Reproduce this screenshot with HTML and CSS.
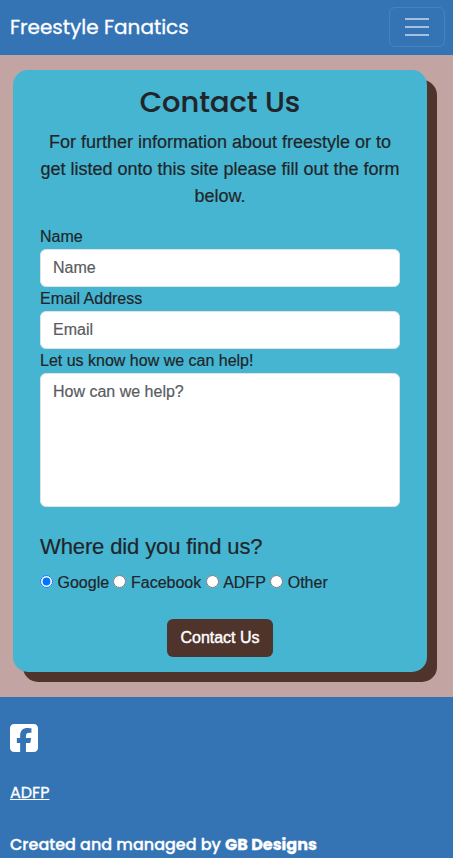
FILE: index.html
```html
<!DOCTYPE html>
<html lang="en">
<head>
<meta charset="utf-8">
<title>Freestyle Fanatics</title>
<link rel="stylesheet" href="styles.css">
</head>
<body>
<nav class="navbar">
  <a class="brand"><span>Freestyle Fanatics</span></a>
  <button class="toggler" type="button" aria-label="Toggle navigation">
    <svg width="30" height="30" viewBox="0 0 30 30"><path stroke="rgba(255,255,255,.55)" stroke-miterlimit="10" stroke-width="2" d="M3 7h24M3 15h24M3 23h24"/></svg>
  </button>
</nav>
<main>
  <section class="card">
    <h1><span>Contact Us</span></h1>
    <p class="intro">For further information about freestyle or to<br>get listed onto this site please fill out the form<br>below.</p>
    <form>
      <label for="name">Name</label>
      <input class="field" id="name" type="text" placeholder="Name">
      <label for="email">Email Address</label>
      <input class="field" id="email" type="email" placeholder="Email">
      <label for="help">Let us know how we can help!</label>
      <textarea class="field" id="help" rows="5" placeholder="How can we help?"></textarea>
      <h2>Where did you find us?</h2>
      <div class="choices">
        <label><input type="radio" name="found" checked><span>Google</span></label>
        <label><input type="radio" name="found"><span>Facebook</span></label>
        <label><input type="radio" name="found"><span>ADFP</span></label>
        <label><input type="radio" name="found"><span>Other</span></label>
      </div>
      <button class="submit" type="button">Contact Us</button>
    </form>
  </section>
</main>
<footer>
  <svg class="facebook" viewBox="0 0 448 512" fill="#fff"><path d="M64 32C28.7 32 0 60.7 0 96V416c0 35.300 28.700 64 64 64h98.200V334.200H109.400V256h52.800V222.300c0-87.100 39.400-127.500 125-127.500c16.200 0 44.200 3.200 55.700 6.400V172c-6-.6-16.500-1-29.600-1c-42 0-58.200 15.900-58.200 57.200V256h83.600l-14.400 78.200H255V480H384c35.300 0 64-28.700 64-64V96c0-35.300-28.700-64-64-64H64z"/></svg>
  <a class="link" href="#">ADFP</a>
  <p class="credit"><span class="made">Created and managed by</span> <strong>GB Designs</strong></p>
</footer>
</body>
</html>
```
FILE: styles.css
```css
* { box-sizing: border-box; }
body {
  margin: 0;
  height: 858px;
  overflow: hidden;
  background: #c2a5a2;
  color: #212529;
  font: 16px/24px "Liberation Sans", Arial, sans-serif;
  -webkit-text-stroke: .2px currentColor;
}
.navbar {
  display: flex;
  justify-content: space-between;
  align-items: flex-start;
  height: 55px;
  padding: 7px 8px 0 10px;
  background: #3474b5;
}
.brand {
  color: #fff;
  font: 20px/40px Poppins, Inter, sans-serif;
  white-space: nowrap;
  -webkit-text-stroke: .3px #fff;
}
.toggler {
  display: flex;
  align-items: center;
  justify-content: center;
  width: 56px;
  height: 40px;
  padding: 0;
  background: none;
  border: 1px solid rgba(255, 255, 255, .1);
  border-radius: 6px;
}
main { padding: 15px 26px 25px 13px; }
.card {
  height: 602px;
  padding: 15px 27px 0;
  background: #46b5d1;
  border-radius: 15px;
  box-shadow: 10px 10px #4f342c;
}
h1 {
  margin: 0 0 10px;
  font: 500 28.8px/34px Poppins, Inter, sans-serif;
  text-align: center;
}
.intro {
  margin: 0 -10px 15px;
  font-size: 18px;
  line-height: 27px;
  text-align: center;
}
label { display: block; height: 24px; }
.field {
  display: block;
  width: 100%;
  height: 38px;
  margin: 0;
  padding: 6px 12px;
  color: #212529;
  background: #fff;
  border: 1px solid #dee2e6;
  border-radius: 6px;
  font: inherit;
}
.field::placeholder { color: #595c5f; opacity: 1; }
textarea.field { height: 134px; resize: none; }
h2 {
  margin: 26px 0 11px;
  font-size: 22px;
  font-weight: 400;
  line-height: 27px;
  letter-spacing: -.12px;
}
.choices { display: flex; gap: 4.4px; }
.choices label { display: flex; }
.choices input { width: 13px; height: 13px; margin: 4px 4.5px 0 0; }
.submit {
  display: block;
  width: 106px;
  height: 38px;
  margin: 24px auto 0;
  padding: 0;
  color: #fff;
  background: #4f342c;
  border: 0;
  border-radius: 6px;
  font: inherit;
  -webkit-text-stroke: .4px #fff;
}
footer {
  height: 161px;
  padding: 25px 10px 0;
  background: #3474b5;
  color: #fff;
  font-family: Poppins, Inter, sans-serif;
  -webkit-text-stroke: .3px #fff;
}
.facebook { display: block; width: 28px; height: 32px; }
.link { display: block; width: max-content; margin-top: 27px; color: #fff; }
.credit { margin: 28px 0 0; font-weight: 500; white-space: nowrap; }
.credit strong { font-weight: 700; }
```
